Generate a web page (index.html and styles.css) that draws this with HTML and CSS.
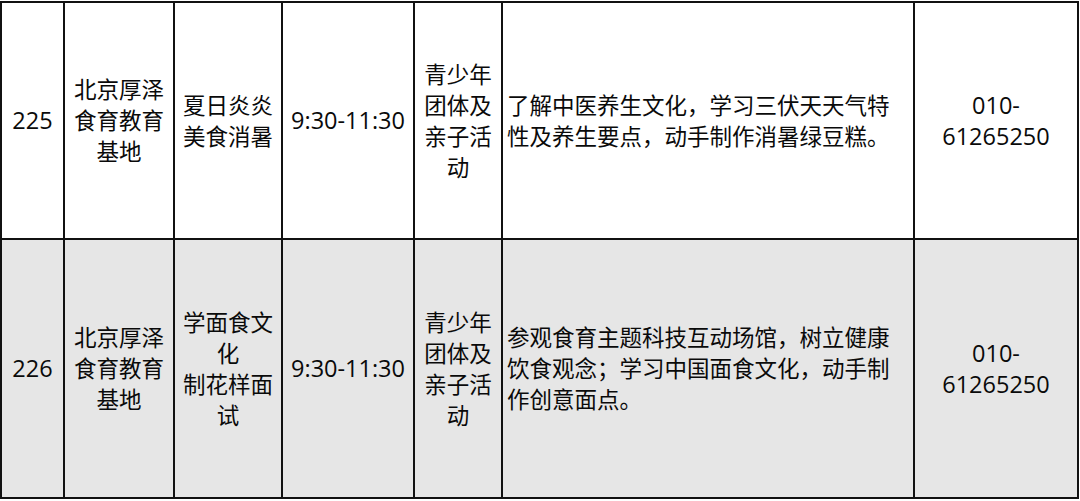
FILE: index.html
```html
<!DOCTYPE html>
<html lang="zh-CN">
<head>
<meta charset="utf-8">
<title>活动列表</title>
<link rel="stylesheet" href="styles.css">
</head>
<body>
<div class="sheet">
  <div class="cell c-no">225</div>
  <div class="cell c-org">北京厚泽食育教育基地</div>
  <div class="cell c-name">夏日炎炎美食消暑</div>
  <div class="cell c-time">9:30-11:30</div>
  <div class="cell c-who">青少年团体及亲子活动</div>
  <div class="cell c-desc">了解中医养生文化，学习三伏天天气特性及养生要点，动手制作消暑绿豆糕。</div>
  <div class="cell c-tel">010-<br>61265250</div>

  <div class="cell c-no alt">226</div>
  <div class="cell c-org alt">北京厚泽食育教育基地</div>
  <div class="cell c-name alt">学面食文化<br>制花样面试</div>
  <div class="cell c-time alt">9:30-11:30</div>
  <div class="cell c-who alt">青少年团体及亲子活动</div>
  <div class="cell c-desc alt">参观食育主题科技互动场馆，树立健康饮食观念；学习中国面食文化，动手制作创意面点。</div>
  <div class="cell c-tel alt">010-<br>61265250</div>
</div>
</body>
</html>
```

FILE: styles.css
```css
html, body {
  margin: 0;
  padding: 0;
  background: #ffffff;
}

body {
  padding-top: 1px;
  font-family: "Open Sans", "Noto Sans CJK SC", sans-serif;
  font-size: 22.5px;
  line-height: 31px;
  color: #0a0a0a;
}

.sheet {
  display: grid;
  grid-template-columns: 63px 110px 108px 132px 88px 412px 164px;
  grid-template-rows: 237px 259px;
  width: max-content;
  border-top: 2px solid #111;
  border-left: 2px solid #111;
}

.cell {
  display: flex;
  align-items: center;
  justify-content: center;
  text-align: center;
  border-right: 2px solid #111;
  border-bottom: 2px solid #111;
  background: #ffffff;
  overflow: hidden;
  padding: 0 2px;
}

.cell.alt {
  background: #e6e6e6;
}

.c-no,
.c-time,
.c-tel {
  font-size: 23.5px;
  padding: 0;
}

.c-desc {
  justify-content: flex-start;
  text-align: left;
  padding: 0 16px 0 4px;
}
```
